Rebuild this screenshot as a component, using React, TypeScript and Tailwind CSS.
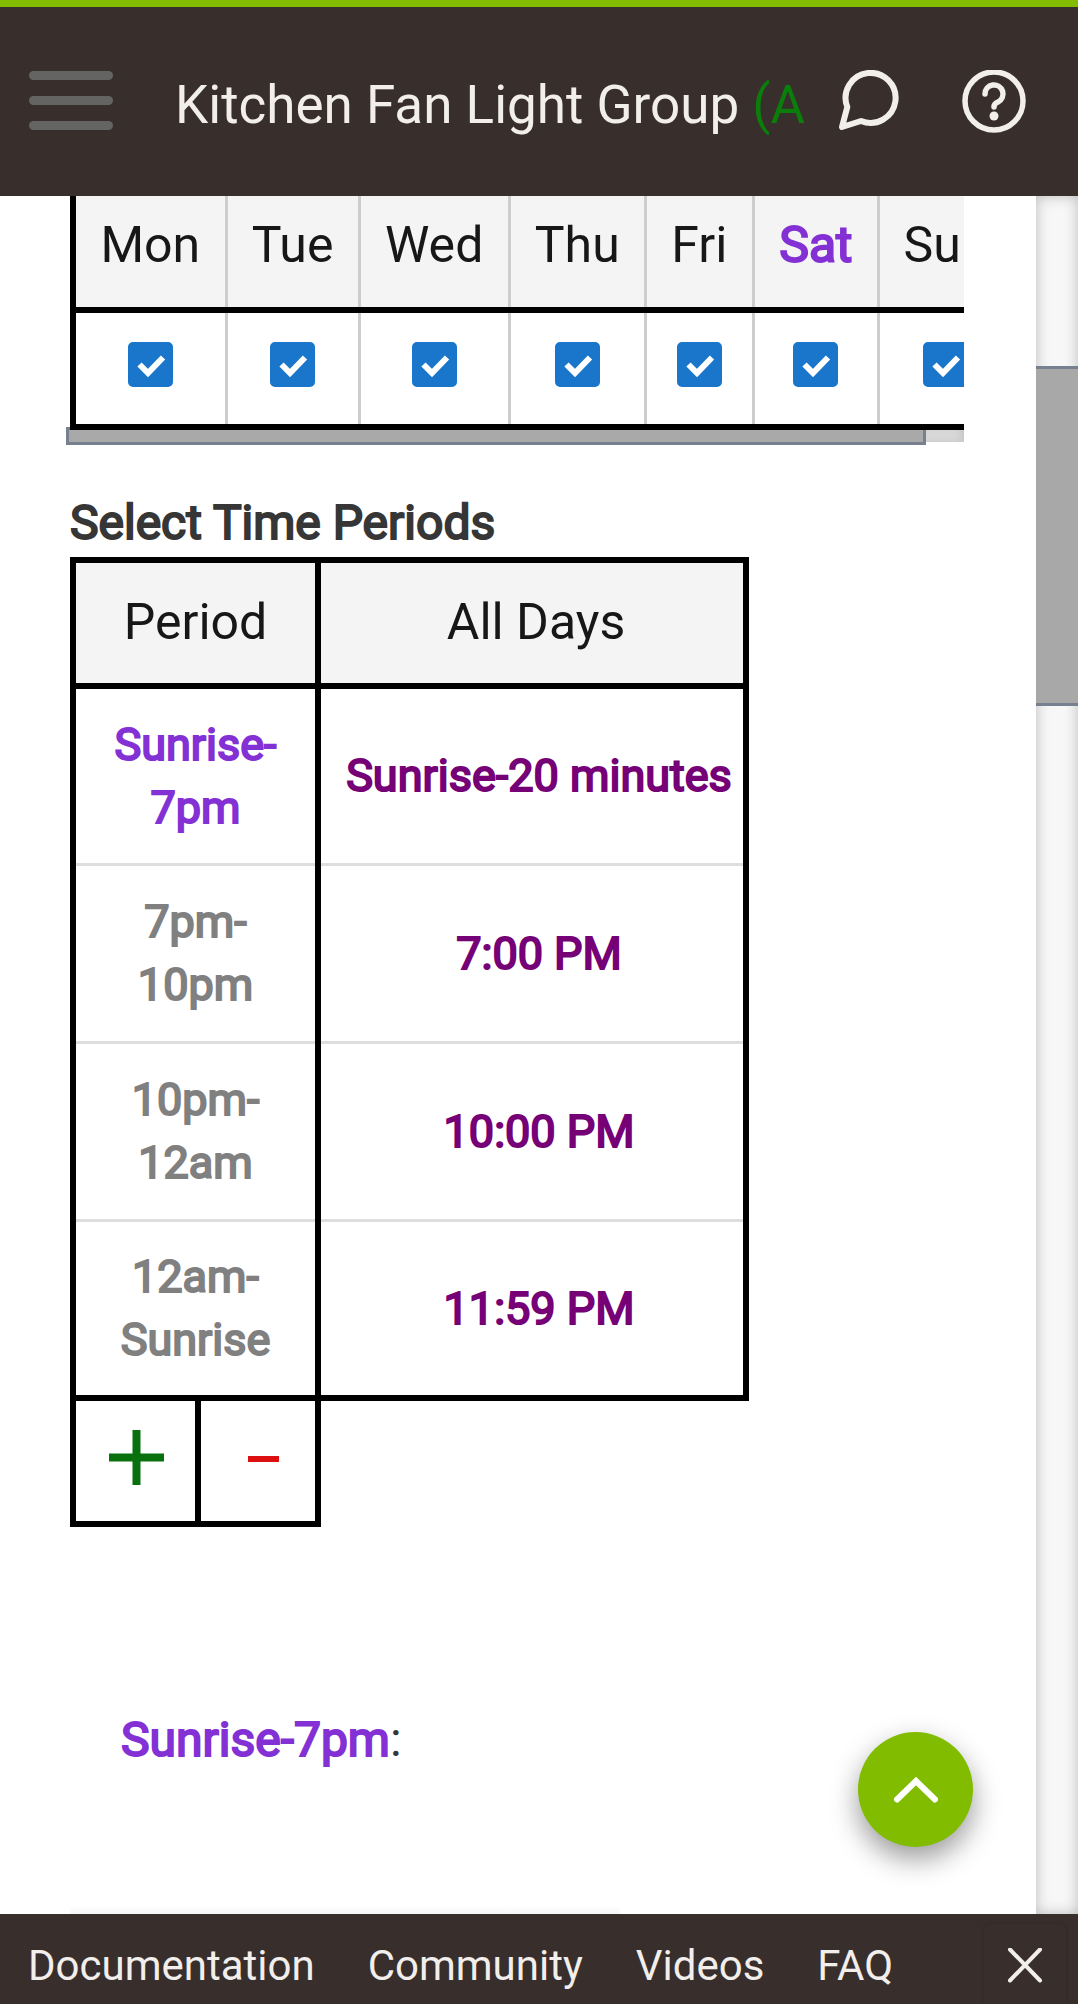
import { useState } from "react";

const days = [
  { name: "Mon", width: "w-[153px]" },
  { name: "Tue", width: "w-[133px]" },
  { name: "Wed", width: "w-[150px]" },
  { name: "Thu", width: "w-[136px]" },
  { name: "Fri", width: "w-[108px]" },
  { name: "Sat", width: "w-[125px]" },
  { name: "Sun", width: "w-[135px]" },
];

const periods = [
  { from: "Sunrise-", to: "7pm", start: "Sunrise-20 minutes", active: true },
  { from: "7pm-", to: "10pm", start: "7:00 PM", active: false },
  { from: "10pm-", to: "12am", start: "10:00 PM", active: false },
  { from: "12am-", to: "Sunrise", start: "11:59 PM", active: false },
];

const links = ["Documentation", "Community", "Videos", "FAQ"];

function Header() {
  return (
    <header className="flex h-[196px] shrink-0 items-start border-t-[7px] border-[#81bc00] bg-[#382e2c] pl-[29px] pr-[52px] pt-[63px] text-[#f1eeec]">
      <button aria-label="Menu" className="flex w-[84px] shrink-0 flex-col gap-4 pt-px">
        <span className="h-[9px] w-full rounded-full bg-[#646462]" />
        <span className="h-[9px] w-full rounded-full bg-[#646462]" />
        <span className="h-[9px] w-full rounded-full bg-[#646462]" />
      </button>
      <h1 className="ml-[62px] mr-[35px] min-w-0 flex-1 overflow-hidden whitespace-nowrap text-[53px] leading-[70px]">
        Kitchen Fan Light Group <span className="text-[#0b7d0b]">(Active)</span>
      </h1>
      <button aria-label="Chat" className="shrink-0">
        <svg className="h-[62px] w-[62px]" viewBox="0 0 62 62" fill="none" stroke="currentColor" strokeWidth="6" strokeLinejoin="round" strokeLinecap="round">
          <path d="M8.300 37 A25 25 0 1 1 22 51 L3 57 Z" />
        </svg>
      </button>
      <button aria-label="Help" className="ml-[61px] shrink-0">
        <svg className="h-16 w-16" viewBox="0 0 64 64" fill="none" stroke="currentColor" strokeWidth="5.5" strokeLinecap="round" strokeLinejoin="round">
          <circle cx="32" cy="31" r="29" />
          <path d="M23 24 A9 9 0 1 1 36 32 Q32 33.500 32 37" />
          <circle cx="32" cy="46" r="4.500" fill="currentColor" stroke="none" />
        </svg>
      </button>
    </header>
  );
}

function DayCheckbox({ day }: { day: string }) {
  const [checked, setChecked] = useState(true);
  return (
    <label className="relative inline-block h-[45px] w-[45px] align-top">
      <input
        type="checkbox"
        aria-label={day}
        checked={checked}
        onChange={(e) => setChecked(e.target.checked)}
        className="peer block h-[45px] w-[45px] appearance-none rounded-[5px] border-2 border-[#1a76ca] checked:bg-[#1a76ca]"
      />
      <svg className="pointer-events-none absolute inset-0 hidden peer-checked:block" viewBox="0 0 45 45" fill="none" stroke="white" strokeWidth="6">
        <path d="M11.500 22.500 L20 31 L35 15.500" />
      </svg>
    </label>
  );
}

function WeekTable() {
  return (
    <div className="overflow-hidden">
      <table className="relative z-10 ml-1 w-[945px] table-fixed border-collapse border-b-[6px] border-l-[6px] border-black bg-white">
        <thead>
          <tr>
            {days.map((d) => (
              <th
                key={d.name}
                className={`${d.width} h-[114px] border-b-[6px] border-r-[3px] border-b-black border-r-[#cdcdcd] bg-[#f4f4f4] pb-[13px] text-center text-[50px] leading-[60px] font-normal ${
                  d.name === "Sat" ? "text-[#8330d4] [-webkit-text-stroke:2px]" : "text-[#171717]"
                }`}
              >
                {d.name}
              </th>
            ))}
          </tr>
        </thead>
        <tbody>
          <tr>
            {days.map((d) => (
              <td key={d.name} className="h-[117px] border-r-[3px] border-r-[#cdcdcd] pb-2 text-center">
                <DayCheckbox day={d.name} />
              </td>
            ))}
          </tr>
        </tbody>
      </table>
      <div className="-mt-[3px] flex h-[18px] items-start">
        <div className="h-[18px] flex-1 border-[3px] border-[#76808f] bg-[#a9a9a9]" />
        <div className="h-[15px] w-[38px] bg-[#d8d8d8] shadow-[inset_-4px_0_6px_#c8c8c8]" />
      </div>
    </div>
  );
}

function PeriodTable() {
  return (
    <table className="ml-1 w-[679px] table-fixed border-collapse border-[6px] border-black text-center">
      <thead>
        <tr className="text-[50px] leading-[60px] text-[#171717]">
          <th className="h-[126px] w-[245px] border-b-[6px] border-r-[6px] border-black bg-[#f4f4f4] pb-0.5 font-normal">Period</th>
          <th className="border-b-[6px] border-black bg-[#f4f4f4] pb-0.5 pl-2 font-normal">All Days</th>
        </tr>
      </thead>
      <tbody>
        {periods.map((p, i) => {
          const line = i < periods.length - 1 ? "h-[178px] border-b-[3px] border-b-[#dedede]" : "h-[178px]";
          return (
            <tr key={p.from} className="text-[45px] leading-[63px] [-webkit-text-stroke:2px]">
              <td className={`${line} border-r-[6px] border-r-black ${p.active ? "text-[#8330d4]" : "text-[#808080]"}`}>
                {p.from}
                <br />
                {p.to}
              </td>
              <td className={`${line} whitespace-nowrap pl-[14px] text-[#760076]`}>{p.start}</td>
            </tr>
          );
        })}
      </tbody>
    </table>
  );
}

export default function App() {
  return (
    <div className="flex h-screen flex-col overflow-hidden bg-white font-[Roboto,sans-serif]">
      <Header />
      <div className="relative flex min-h-0 flex-1">
        <main className="flex min-w-0 flex-1 flex-col overflow-hidden pl-[66px] pr-[72px]">
          <WeekTable />
          <h2 className="ml-1 mt-[48px] text-[48px] leading-[60px] text-[#363636] [-webkit-text-stroke:2px]">Select Time Periods</h2>
          <div className="mt-1">
            <PeriodTable />
            <div className="ml-1 flex h-[126px] w-[251px] border-x-[6px] border-b-[6px] border-black">
              <button aria-label="Add period" className="flex w-[125px] items-center justify-center border-r-[6px] border-black pb-2 pl-0.5">
                <svg className="h-[55px] w-[55px]" viewBox="0 0 55 55" stroke="#08700c" strokeWidth="8">
                  <path d="M0 27.500H55M27.500 0V55" />
                </svg>
              </button>
              <button aria-label="Remove period" className="flex flex-1 items-center justify-center pb-1 pl-2.5">
                <span className="h-1.5 w-[31px] bg-[#dc1010]" />
              </button>
            </div>
          </div>
          <p className="ml-[55px] mt-[183px] text-[48px] leading-[60px] text-[#363636]">
            <span className="text-[#8330d4] [-webkit-text-stroke:2px]">Sunrise-7pm</span>:
          </p>
          <div className="ml-1 mt-auto h-2 w-[550px] shrink-0 bg-linear-to-b from-white to-[#f6f6f6]" />
        </main>
        <div className="w-[42px] shrink-0 bg-[#f7f7f7] pt-[170px] shadow-[inset_0_0_14px_#bbbbbb]">
          <div className="h-[340px] border-y-[3px] border-[#76808f] bg-[#a8a8a8]" />
        </div>
        <button
          aria-label="Scroll to top"
          className="absolute bottom-[67px] right-[105px] flex h-[115px] w-[115px] items-center justify-center rounded-full bg-[#81bc00] shadow-[0_12px_28px_rgba(0,0,0,0.4)]"
        >
          <svg className="h-[28px] w-[46px]" viewBox="0 0 46 28" fill="none" stroke="white" strokeWidth="6" strokeLinecap="round" strokeLinejoin="miter">
            <path d="M4 23.500 L23 5 L42 23.500" />
          </svg>
        </button>
      </div>
      <footer className="flex h-[90px] shrink-0 items-end bg-[#382e2c] pl-7 text-[#f1eeec]">
        <nav className="flex gap-[53px] pb-[10px] text-[42px] leading-[56px]">
          {links.map((l) => (
            <a key={l} href="#">
              {l}
            </a>
          ))}
        </nav>
        <button aria-label="Close" className="ml-auto mr-3 flex h-20 w-[82px] items-center justify-center rounded-t-lg pt-1 shadow-[0_0_4px_rgba(0,0,0,0.15)]">
          <svg className="h-9 w-9" viewBox="0 0 36 36" stroke="currentColor" strokeWidth="4" strokeLinecap="round">
            <path d="M3 1.500L33 32.500M33 1.500L3 32.500" />
          </svg>
        </button>
      </footer>
    </div>
  );
}
